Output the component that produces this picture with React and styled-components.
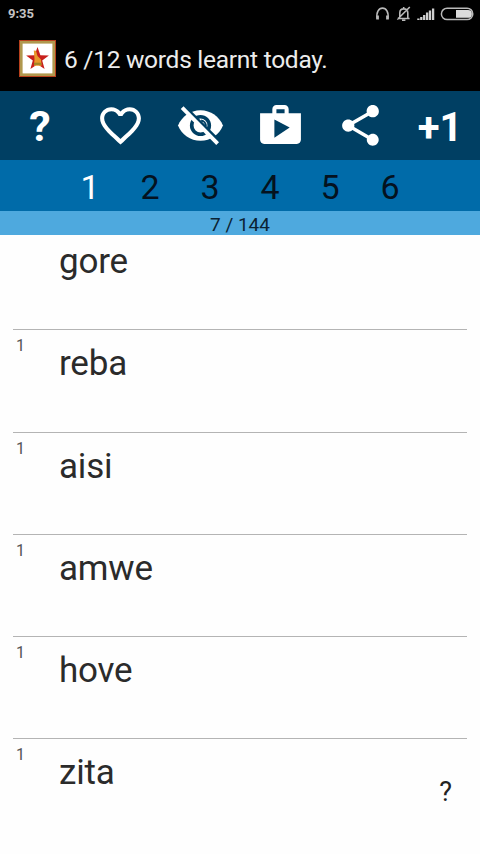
import React from 'react'
import styled, { createGlobalStyle } from 'styled-components'
import { MdFavoriteBorder, MdShop, MdShare } from 'react-icons/md'

const words = [
  { text: 'gore', level: '' },
  { text: 'reba', level: '1' },
  { text: 'aisi', level: '1' },
  { text: 'amwe', level: '1' },
  { text: 'hove', level: '1' },
  { text: 'zita', level: '1' },
]

const levels = [1, 2, 3, 4, 5, 6]

const StatusIcons = () => (
  <svg width="100" height="20" viewBox="0 0 100 20" fill="none" stroke="#b9b9b9">
    {/* headphones */}
    <path d="M2.2 15C-0.6 0.5 15.6 0.5 12.8 15" strokeWidth="1.6" />
    <path d="M2.6 11.5v4M12.4 11.5v4" strokeWidth="2.6" />
    {/* muted bell */}
    <path d="M22.6 14.5h12M24.8 14V9c0-5.5 8-5.5 8 0v5M28.7 5V3M27 16.3h3.4M22.3 15.5L34.8 3" strokeWidth="1.6" />
    {/* signal */}
    <path d="M43.4 16v-1.5M46.3 16v-3M49.2 16v-5M52.1 16V8.500M55 16V6.500M58.1 16V4.500" stroke="#cfcfcf" strokeWidth="2.300" />
    {/* battery */}
    <rect x="66.4" y="4.2" width="31.4" height="11.4" rx="5.7" strokeWidth="1.5" />
    <path d="M81 6h12a3.9 3.9 0 0 1 0 7.8H81z" fill="#dcdcdc" stroke="none" />
  </svg>
)

const Logo = () => (
  <svg width="37" height="37" viewBox="0 0 37 37">
    <rect width="37" height="37" fill="#b8401c" />
    <rect x="1" y="1" width="35" height="35" fill="#b0984e" />
    <rect x="3.6" y="3.6" width="29.8" height="29.8" fill="#fff" />
    <path d="M18.5 7l2.9 8.2 8.5.2-6.7 5.2 2.4 8.4-7.1-4.8-7.1 4.8 2.4-8.4-6.7-5.2 8.5-.2z" fill="#c8201c" />
    <path d="M14.8 10.5l2.200.3 1.500 5.200 3.500 3.500.5 6.200h-7.500l.5-6.700z" fill="#e8992a" />
    <path d="M15 22.700h7.500v2.200H15z" fill="#a08526" />
  </svg>
)

const EyeOff = () => (
  <svg width="49" height="49" viewBox="0 0 24 24">
    <path d="M12 4.5C7 4.5 2.730 7.610 1 12c1.730 4.390 6 7.500 11 7.500s9.270-3.110 11-7.500c-1.730-4.390-6-7.500-11-7.500z" fill="#fff" />
    <circle cx="12" cy="12" r="4.3" fill="none" stroke="#003f63" strokeWidth="1.8" />
    <path d="M12.3 9.6a2.600 2.600 0 0 1 2.300 2.700" fill="none" stroke="#003f63" strokeWidth="1" />
    <path d="M4.400 2.800L21.300 19.700" stroke="#003f63" strokeWidth="1.500" />
    <path d="M3 3.300L20.400 20.900" stroke="#fff" strokeWidth="1.9" />
  </svg>
)

const App = () => {
  return (
    <>
      <GlobalStyle />
      <Screen>
        <StatusBar>
          <span>9:35</span>
          <StatusIcons />
        </StatusBar>

        <Header>
          <Logo />
          <h1>6 /12 words learnt today.</h1>
        </Header>

        {/* action buttons */}
        <Toolbar>
          <Action $size={43} $drop={2}>?</Action>
          <Action><MdFavoriteBorder /></Action>
          <Action><EyeOff /></Action>
          <Action><MdShop /></Action>
          <Action><MdShare /></Action>
          <Action $size={40} $drop={4}>+1</Action>
        </Toolbar>

        <Levels>
          {levels.map((n) => (
            <Level key={n} $active={n === 1}>{n}</Level>
          ))}
        </Levels>

        <Counter>7 / 144</Counter>

        <List>
          {words.map((word) => (
            <Row key={word.text}>
              <Badge>{word.level}</Badge>
              <Word>{word.text}</Word>
            </Row>
          ))}
        </List>
        <Hint>?</Hint>
      </Screen>
    </>
  )
}

export default App

const GlobalStyle = createGlobalStyle`
  * {
    box-sizing: border-box;
  }
  body {
    margin: 0;
    background: #fff;
    font-family: Roboto, sans-serif;
  }
`

const Screen = styled.main`
  position: relative;
  display: flex;
  flex-direction: column;
  width: 480px;
  height: 854px;
  overflow: hidden;
  background: #fefefe;
`

const StatusBar = styled.div`
  display: flex;
  flex: none;
  align-items: center;
  justify-content: space-between;
  height: 27px;
  padding: 0 5px 0 8px;
  background: #000;
  color: #c4c4c4;
  font-size: 13px;
  font-weight: 700;
`

const Header = styled.header`
  display: flex;
  flex: none;
  align-items: center;
  gap: 8px;
  height: 64px;
  padding: 0 0 1px 19px;
  background: #000;
  color: #ececec;

  h1 {
    margin: 2px 0 0;
    font-size: 24.5px;
    font-weight: 400;
    letter-spacing: -0.27px;
    white-space: nowrap;
  }
`

const Toolbar = styled.nav`
  display: grid;
  flex: none;
  grid-template-columns: repeat(6, 80px);
  height: 69px;
  background: #003f63;
`

const Action = styled.button`
  display: flex;
  align-items: center;
  justify-content: center;
  padding: ${(props) => props.$drop || 0}px 0 0;
  border: 0;
  background: none;
  color: #fff;
  font-family: inherit;
  font-size: ${(props) => props.$size || 49}px;
  font-weight: 700;
  line-height: 1;
`

const Levels = styled.div`
  display: flex;
  flex: none;
  justify-content: center;
  height: 51px;
  background: #006ba9;
`

const Level = styled.div`
  width: 60px;
  color: ${(props) => (props.$active ? '#fff' : '#04121f')};
  font-size: 34px;
  line-height: 54px;
  text-align: center;
`

const Counter = styled.div`
  flex: none;
  height: 24px;
  background: #4ea9de;
  color: #0b2233;
  font-size: 19px;
  line-height: 27px;
  text-align: center;
`

const List = styled.div`
  flex: 1;
  min-height: 0;
  margin-top: -8px;
  padding: 0 13px;
`

const Row = styled.div`
  display: flex;
  height: 102.3px;
  border-top: 1px solid #b4b4b4;

  &:first-child {
    border-color: transparent;
  }
`

const Badge = styled.span`
  width: 46px;
  padding: 6px 0 0 3px;
  color: #555;
  font-size: 16px;
`

const Word = styled.span`
  padding-top: 13px;
  color: #2b2b2b;
  font-size: 35px;
  letter-spacing: -0.2px;
  line-height: 41px;
`

const Hint = styled.span`
  position: absolute;
  right: 28px;
  bottom: 46px;
  color: #222;
  font-size: 27px;
  line-height: 32px;
`
